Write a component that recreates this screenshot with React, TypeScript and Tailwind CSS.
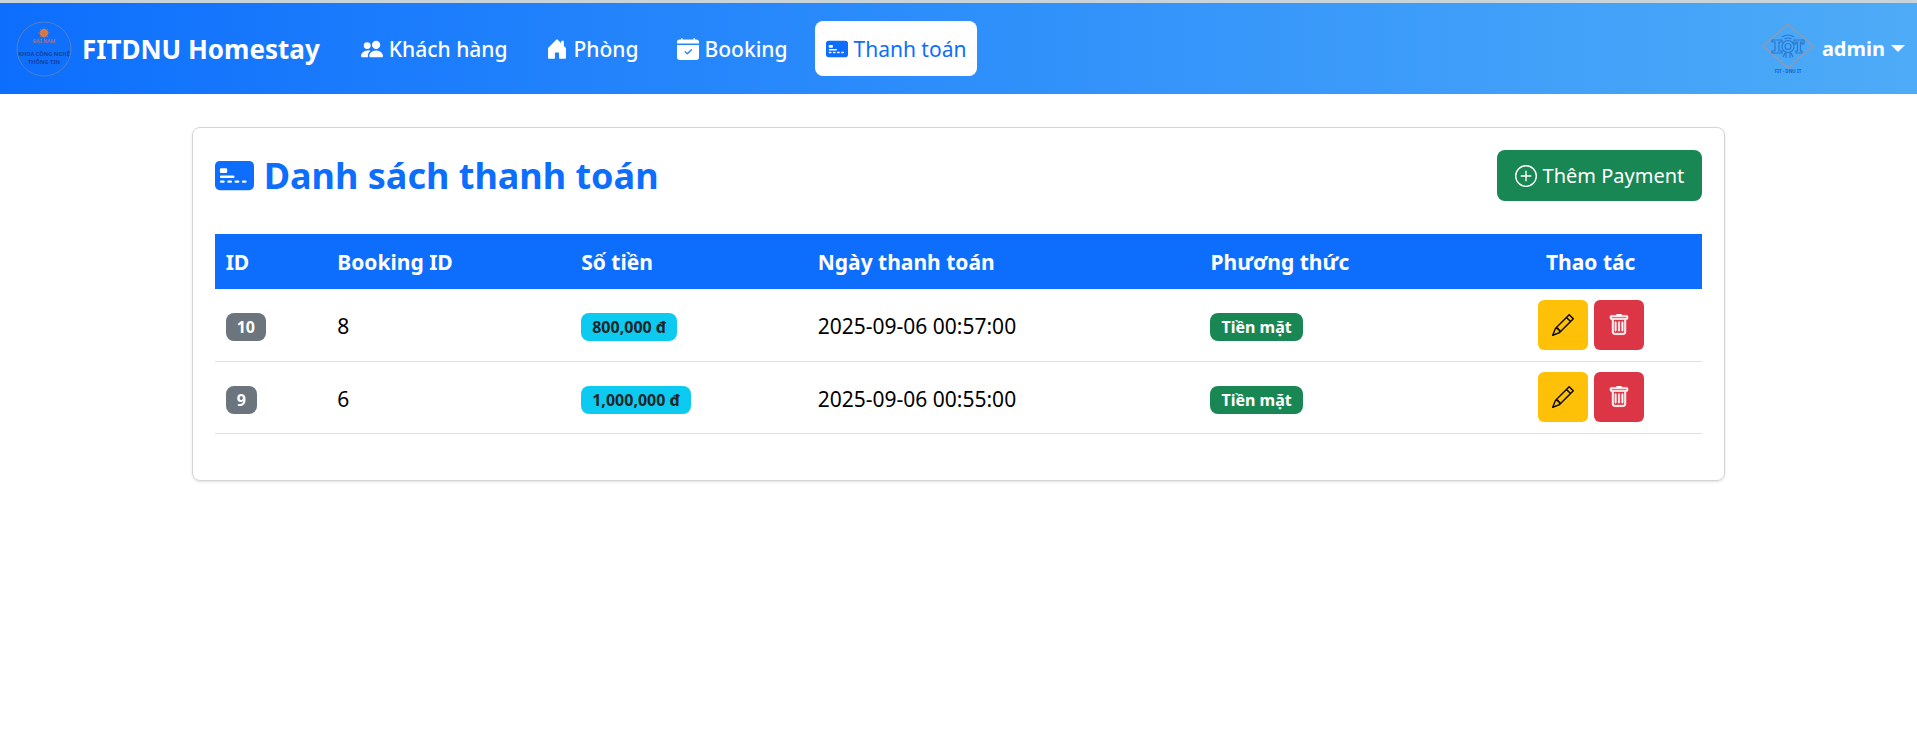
import type { ReactNode } from 'react'
import {
  BsCalendarCheckFill,
  BsCreditCard2FrontFill,
  BsHouseDoorFill,
  BsPencil,
  BsPeopleFill,
  BsPlusCircle,
  BsTrash,
} from 'react-icons/bs'

type Payment = { id: number; bookingId: number; amount: string; paidAt: string; method: string }

const payments: Payment[] = [
  { id: 10, bookingId: 8, amount: '800,000 đ', paidAt: '2025-09-06 00:57:00', method: 'Tiền mặt' },
  { id: 9, bookingId: 6, amount: '1,000,000 đ', paidAt: '2025-09-06 00:55:00', method: 'Tiền mặt' },
]

function BrandLogo() {
  return (
    <svg viewBox="0 0 56 56" className="size-14" role="img" aria-label="FITDNU">
      <circle cx="28" cy="28" r="27" fill="none" stroke="#5580c4" strokeWidth="1" />
      <circle cx="28" cy="12" r="4" fill="#e87a3c" />
      <path d="M28 6.500v11M22.500 12h11M24 8l8 8M32 8l-8 8" stroke="#c4774f" strokeWidth="0.8" />
      <text x="28" y="22" textAnchor="middle" fontSize="5" fontWeight="700" fill="#a8726f">ĐẠI NAM</text>
      <text x="28" y="35" textAnchor="middle" fontSize="5.600" fontWeight="700" fill="#1440a4">KHOA CÔNG NGHỆ</text>
      <text x="28" y="43" textAnchor="middle" fontSize="5.600" fontWeight="700" fill="#1440a4">THÔNG TIN</text>
    </svg>
  )
}

function Avatar() {
  return (
    <svg viewBox="0 0 52 52" className="size-[52px]" role="img" aria-label="IOT">
      <path d="M26 1 51 23 26 45 1 23Z" fill="none" stroke="#9398ae" strokeWidth="1.500" />
      <g fill="none" stroke="#2a78d0" strokeWidth="1.200">
        <path d="M10 17h10v2h-3v9h3v2h-10v-2h3v-9h-3z" />
        <path d="M32 17h10v4h-2v-2h-1.500v9h1.500v2h-6v-2h1.500v-9h-1.500v2h-2z" />
        <circle cx="26" cy="23.500" r="6" />
        <circle cx="26" cy="23.500" r="3" />
        <path d="M20 14q6-4 12 0M22.500 16q3.500-2 7 0M24 30v5M28 30v5M21 34l2-4M31 34l-2-4" />
      </g>
      <text x="26" y="50" textAnchor="middle" fontSize="4.500" fontWeight="700" fill="#1765bd">FIT - DNU IT</text>
    </svg>
  )
}

function NavItem({ icon, label, active = false }: { icon: ReactNode; label: string; active?: boolean }) {
  return (
    <a
      href="#"
      aria-current={active ? 'page' : undefined}
      className={
        active
          ? 'flex h-[55px] items-center gap-[6px] rounded-lg bg-white px-[11px] text-[#0d6efd]'
          : 'flex h-[55px] items-center gap-[6px] rounded-lg px-[11px] font-medium text-white'
      }
    >
      {icon}
      {label}
    </a>
  )
}

function Badge({ className, children }: { className: string; children: ReactNode }) {
  return (
    <span className={`inline-flex h-7 items-center rounded-lg px-[11px] align-middle text-base font-bold ${className}`}>
      {children}
    </span>
  )
}

export default function App() {
  return (
    <div className="min-h-screen bg-white font-['Noto_Sans',sans-serif] text-[21px] leading-7 text-[#212529]">
      <header className="flex h-[94px] items-center border-t-[3px] border-[#c9d3da] bg-linear-to-r from-[#0d6efd] to-[#4dabf7] pr-3 pl-4 text-white">
        <a href="#" className="mr-[30px] flex items-center gap-[10px] text-[26px] font-bold">
          <BrandLogo />
          FITDNU Homestay
        </a>
        <nav className="flex items-center gap-4">
          <NavItem icon={<BsPeopleFill className="size-[22px]" />} label="Khách hàng" />
          <NavItem icon={<BsHouseDoorFill className="size-[22px]" />} label="Phòng" />
          <NavItem icon={<BsCalendarCheckFill className="size-[22px]" />} label="Booking" />
          <NavItem icon={<BsCreditCard2FrontFill className="size-[22px]" />} label="Thanh toán" active />
        </nav>
        <button type="button" className="ml-auto flex items-center gap-2 text-xl font-bold">
          <Avatar />
          <span className="flex items-center gap-[6px]">
            admin
            <span className="border-x-[7px] border-t-[7px] border-x-transparent border-t-white" />
          </span>
        </button>
      </header>

      <main className="mx-auto mt-[33px] w-4/5 rounded-lg border border-[#d3d5d7] px-[22px] pt-[22px] pb-[46px] shadow-sm">
        <div className="mb-[33px] flex items-center justify-between">
          <h1 className="flex items-center gap-[10px] text-[36px] leading-[51px] font-bold text-[#0d6efd]">
            <BsCreditCard2FrontFill className="size-[39px]" />
            Danh sách thanh toán
          </h1>
          <button type="button" className="flex h-[51px] items-center gap-[6px] rounded-lg bg-[#198754] px-[18px] text-xl text-white">
            <BsPlusCircle className="size-[22px]" />
            Thêm Payment
          </button>
        </div>

        <table className="w-full table-fixed border-collapse text-left">
          <colgroup>
            <col className="w-[7.5%]" />
            <col className="w-[16.4%]" />
            <col className="w-[15.9%]" />
            <col className="w-[26.4%]" />
            <col className="w-[18.8%]" />
            <col />
          </colgroup>
          <thead>
            <tr className="h-[55px] bg-[#0d6efd] text-white">
              <th className="px-[11px]">ID</th>
              <th className="px-[11px]">Booking ID</th>
              <th className="px-[11px]">Số tiền</th>
              <th className="px-[11px]">Ngày thanh toán</th>
              <th className="px-[11px]">Phương thức</th>
              <th className="px-[11px] text-center">Thao tác</th>
            </tr>
          </thead>
          <tbody>
            {payments.map((p) => (
              <tr key={p.id} className="h-[72px] border-b border-[#dee2e6] text-black">
                <td className="px-[11px] pt-[3px]">
                  <Badge className="bg-[#6c757d] text-white">{p.id}</Badge>
                </td>
                <td className="px-[11px] pt-[3px]">{p.bookingId}</td>
                <td className="px-[11px] pt-[3px]">
                  <Badge className="bg-[#0dcaf0] text-[#212529]">{p.amount}</Badge>
                </td>
                <td className="px-[11px] pt-[3px]">{p.paidAt}</td>
                <td className="px-[11px] pt-[3px]">
                  <Badge className="bg-[#198754] text-white">{p.method}</Badge>
                </td>
                <td className="px-[11px]">
                  <div className="flex justify-center gap-[6px]">
                    <button type="button" aria-label="Sửa" className="flex size-[50px] items-center justify-center rounded-md bg-[#ffc107] text-black">
                      <BsPencil className="size-[22px]" />
                    </button>
                    <button type="button" aria-label="Xóa" className="flex size-[50px] items-center justify-center rounded-md bg-[#dc3545] text-white">
                      <BsTrash className="size-[22px] stroke-[0.4]" />
                    </button>
                  </div>
                </td>
              </tr>
            ))}
          </tbody>
        </table>
      </main>
    </div>
  )
}
